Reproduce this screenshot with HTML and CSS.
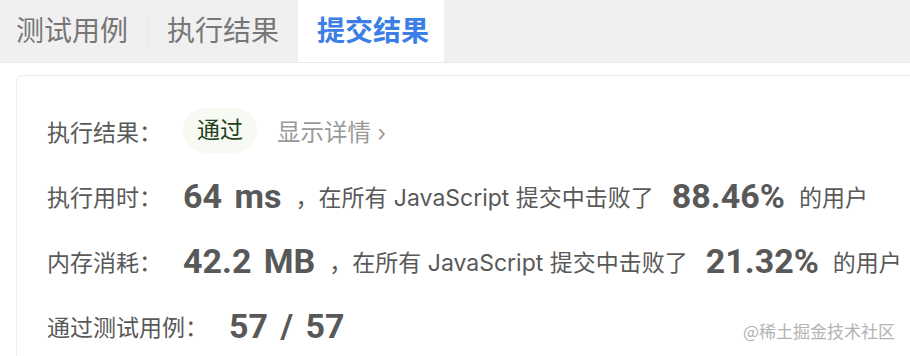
FILE: index.html
```html
<!DOCTYPE html>
<html lang="zh-CN">
<head>
  <meta charset="UTF-8">
  <title>提交结果</title>
  <link rel="stylesheet" href="styles.css">
</head>
<body>
  <div class="tabs">
    <div class="tab tab-first">测试用例</div>
    <span class="tab-sep"></span>
    <div class="tab">执行结果</div>
    <div class="tab active">提交结果</div>
  </div>

  <div class="card">
    <div class="row">
      <span class="label">执行结果：</span>
      <span class="badge">通过</span>
      <span class="detail">显示详情 <span class="chev">›</span></span>
    </div>
    <div class="row">
      <span class="label">执行用时：</span>
      <span class="num">64 ms</span>
      <span class="text">，在所有 JavaScript 提交中击败了</span>
      <span class="num">88.46%</span>
      <span class="text">的用户</span>
    </div>
    <div class="row">
      <span class="label">内存消耗：</span>
      <span class="num">42.2 MB</span>
      <span class="text">，在所有 JavaScript 提交中击败了</span>
      <span class="num">21.32%</span>
      <span class="text">的用户</span>
    </div>
    <div class="row">
      <span class="label">通过测试用例：</span>
      <span class="num">57 / 57</span>
    </div>
  </div>

  <div class="watermark">@稀土掘金技术社区</div>
</body>
</html>
```

FILE: styles.css
```css
body {
  font-family: "Inter", "Noto Sans CJK SC", sans-serif;
  margin: 0;
  padding: 0;
  background: #ffffff;
  color: #595959;
  overflow: hidden;
  height: 356px;
  position: relative;
}

.tabs {
  display: flex;
  align-items: center;
  height: 62px;
  background-color: #f0f0f0;
  border-bottom: 1px solid #e9e9e9;
}

.tab {
  font-size: 28px;
  line-height: 62px;
  padding: 0 19px;
  color: #777777;
}

.tab-first {
  padding-left: 16px;
}

.tab-sep {
  width: 1px;
  height: 34px;
  background-color: #e6e6e6;
}

.tab.active {
  background-color: #ffffff;
  color: #3b7ee8;
  font-weight: bold;
  padding-right: 15px;
}

.card {
  margin: 12px -20px 0 16px;
  border: 1px solid #ececec;
  border-radius: 6px;
  padding: 22px 30px 20px;
}

.row {
  display: flex;
  align-items: center;
  height: 65px;
  white-space: nowrap;
}

.label {
  font-size: 23px;
  margin-right: 21px;
  color: #595959;
}

.badge {
  font-size: 23px;
  line-height: 45px;
  padding: 0 14px;
  border-radius: 23px;
  background-color: #f6faf3;
  color: #23401a;
  margin-right: 20px;
}

.detail {
  font-size: 23.5px;
  color: #999999;
}

.chev {
  font-size: 22px;
}

.num {
  font-family: "Roboto", "Liberation Sans", sans-serif;
  font-weight: bold;
  font-size: 34px;
  word-spacing: 4px;
  color: #585858;
  margin: 0 14px 0 0;
}

.text {
  font-size: 23px;
  color: #595959;
  margin-right: 18px;
}

.watermark {
  position: absolute;
  right: 15px;
  bottom: 13px;
  font-family: "Noto Sans CJK SC", sans-serif;
  font-size: 17px;
  color: #b3b3b3;
  text-shadow: 0 0 2px #ffffff;
}
```
